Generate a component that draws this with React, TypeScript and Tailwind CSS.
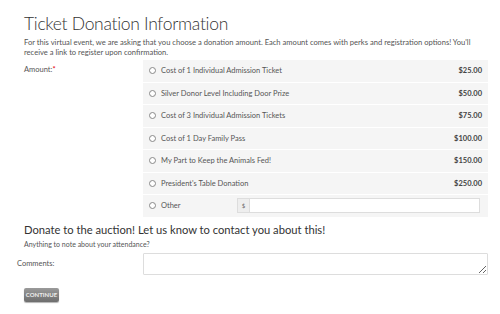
const options = [
  { label: "Cost of 1 Individual Admission Ticket", price: "$25.00" },
  { label: "Silver Donor Level Including Door Prize", price: "$50.00" },
  { label: "Cost of 3 Individual Admission Tickets", price: "$75.00" },
  { label: "Cost of 1 Day Family Pass", price: "$100.00" },
  { label: "My Part to Keep the Animals Fed!", price: "$150.00" },
  { label: "President's Table Donation", price: "$250.00" },
];

const Radio = () => (
  <span className="inline-block w-[7px] h-[7px] rounded-full border border-[#888] bg-white shrink-0" />
);

export default function App() {
  return (
    <div
      className="w-[500px] h-[314px] bg-white text-[#444] overflow-hidden"
      style={{ fontFamily: "Lato, sans-serif" }}
    >
      <div className="pt-[12px] pl-[24px] pr-[20px]">
        <h1 className="text-[17.5px] leading-[24px] font-light text-[#333] tracking-[-0.3px]">
          Ticket Donation Information
        </h1>
        <p className="mt-[1px] text-[7.6px] leading-[10px] text-[#555]">
          For this virtual event, we are asking that you choose a donation amount. Each amount comes with perks and registration options! You'll
          receive a link to register upon confirmation.
        </p>
      </div>

      <div className="mt-[3px] flex">
        <div className="w-[143px] pl-[24px] pt-[4px] text-[7.5px] text-[#555]">
          Amount:<span className="text-red-600">*</span>
        </div>
        <div className="w-[345px] flex flex-col gap-px">
          {options.map((o) => (
            <div key={o.label} className="h-[21.5px] bg-[#f5f5f5] flex items-center pl-[6px] pr-[6px] text-[7.5px]">
              <Radio />
              <span className="ml-[5px] text-[#555]">{o.label}</span>
              <span className="ml-auto font-bold text-[#444]">{o.price}</span>
            </div>
          ))}
          <div className="h-[21.5px] bg-[#f5f5f5] flex items-center pl-[6px] pr-[8px] text-[7.5px]">
            <Radio />
            <span className="ml-[5px] text-[#555] w-[76px]">Other</span>
            <div className="flex flex-1 h-[15px]">
              <span className="w-[13px] border border-[#ddd] bg-[#eee] flex items-center justify-center text-[6px] text-[#666]">$</span>
              <input className="flex-1 border border-[#ddd] border-l-0 bg-white outline-none" />
            </div>
          </div>
        </div>
      </div>

      <div className="pl-[24px] mt-[5px]">
        <h2 className="text-[11.2px] leading-[16px] text-[#333]">
          Donate to the auction! Let us know to contact you about this!
        </h2>
        <p className="text-[7px] leading-[12px] text-[#555]">Anything to note about your attendance?</p>
      </div>

      <div className="mt-[3px] flex">
        <div className="w-[143px] pl-[17px] pt-[5px] text-[7.5px] text-[#555]">Comments:</div>
        <textarea className="block w-[345px] h-[22px] border border-[#ddd] rounded-[1px] resize-y outline-none" />
      </div>

      <div className="pl-[24px] mt-[13px]">
        <button className="block h-[14px] w-[35px] rounded-[2px] bg-gradient-to-b from-[#9a9a9a] to-[#6e6e6e] text-[#eee] text-[6px] font-bold shadow-[0_1px_1px_rgba(0,0,0,0.3)]">
          CONTINUE
        </button>
      </div>
    </div>
  );
}
